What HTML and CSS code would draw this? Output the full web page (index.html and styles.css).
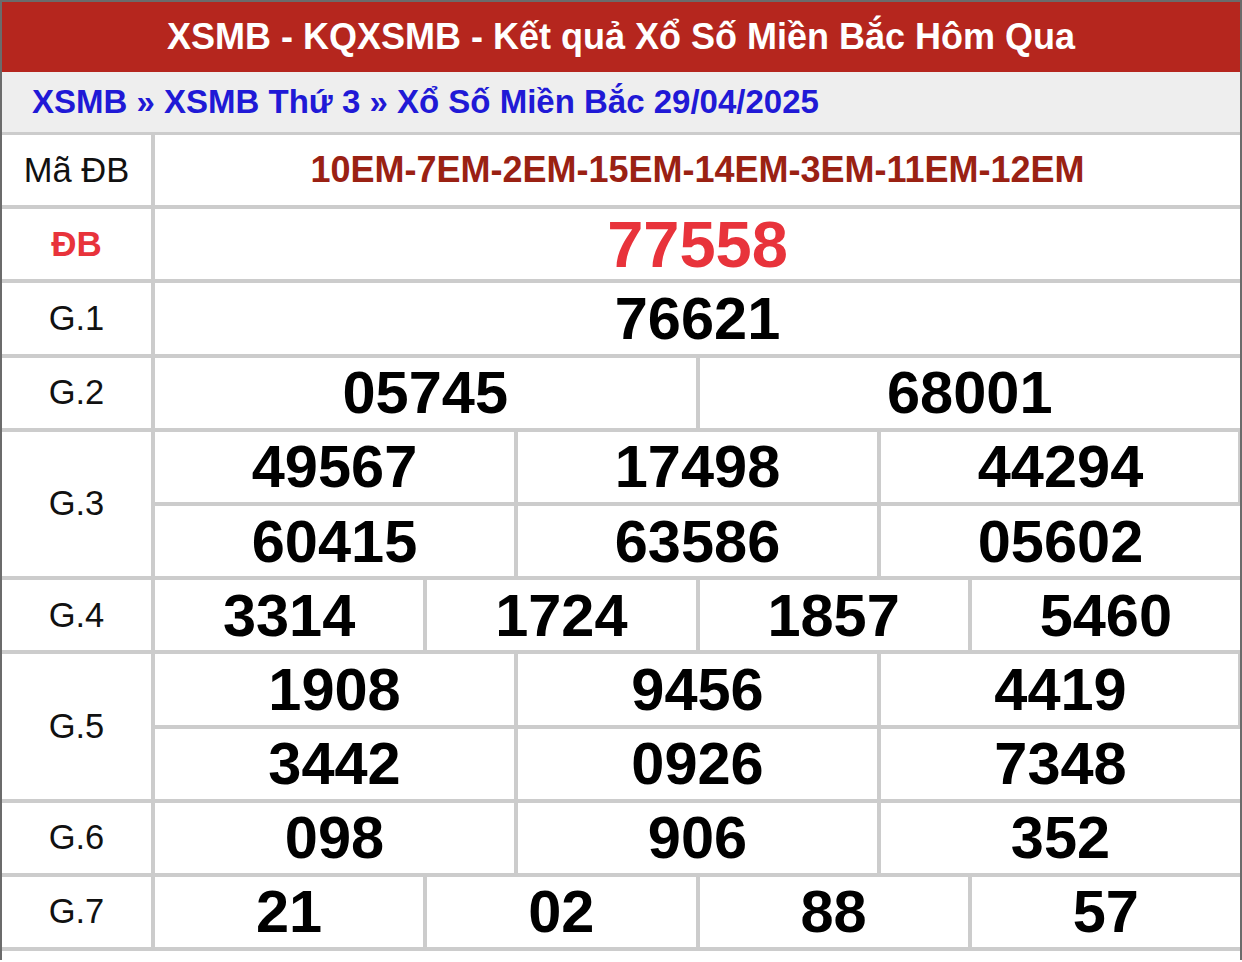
FILE: index.html
```html
<!DOCTYPE html>
<html lang="vi">
<head>
<meta charset="utf-8">
<title>XSMB - KQXSMB</title>
<link rel="stylesheet" href="styles.css">
</head>
<body>
<div class="box">
  <h1 class="title">XSMB - KQXSMB - Kết quả Xổ Số Miền Bắc Hôm Qua</h1>
  <div class="crumb"><a>XSMB</a> » <a>XSMB Thứ 3</a> » <a>Xổ Số Miền Bắc 29/04/2025</a></div>
  <div class="table">
    <div class="label">Mã ĐB</div>
    <div class="vals c1"><div class="cell code">10EM-7EM-2EM-15EM-14EM-3EM-11EM-12EM</div></div>

    <div class="label db">ĐB</div>
    <div class="vals c1"><div class="cell num special">77558</div></div>

    <div class="label">G.1</div>
    <div class="vals c1"><div class="cell num">76621</div></div>

    <div class="label">G.2</div>
    <div class="vals c2"><div class="cell num">05745</div><div class="cell num">68001</div></div>

    <div class="label tall">G.3</div>
    <div class="vals c3 r2">
      <div class="cell num">49567</div><div class="cell num">17498</div><div class="cell num edge">44294</div>
      <div class="cell num">60415</div><div class="cell num">63586</div><div class="cell num">05602</div>
    </div>

    <div class="label">G.4</div>
    <div class="vals c4"><div class="cell num">3314</div><div class="cell num">1724</div><div class="cell num">1857</div><div class="cell num">5460</div></div>

    <div class="label tall">G.5</div>
    <div class="vals c3 r2">
      <div class="cell num">1908</div><div class="cell num">9456</div><div class="cell num edge">4419</div>
      <div class="cell num">3442</div><div class="cell num">0926</div><div class="cell num">7348</div>
    </div>

    <div class="label">G.6</div>
    <div class="vals c3"><div class="cell num">098</div><div class="cell num">906</div><div class="cell num">352</div></div>

    <div class="label">G.7</div>
    <div class="vals c4"><div class="cell num">21</div><div class="cell num">02</div><div class="cell num">88</div><div class="cell num">57</div></div>
  </div>
</div>
</body>
</html>
```
FILE: styles.css
```css
html, body {
  margin: 0;
  padding: 0;
  background: #ffffff;
}
body {
  font-family: "Liberation Sans", Arial, Helvetica, sans-serif;
  width: 1242px;
  height: 962px;
  overflow: hidden;
}
.box {
  border: 2px solid #6b6b6b;
  border-bottom: none;
  min-height: 960px;
  box-sizing: border-box;
}
.title {
  margin: 0;
  height: 70px;
  background: #b5261e;
  color: #ffffff;
  font-size: 36px;
  font-weight: bold;
  display: flex;
  align-items: center;
  justify-content: center;
}
.crumb {
  height: 60px;
  line-height: 60px;
  background: #eeeeee;
  color: #2019d6;
  font-size: 33px;
  font-weight: bold;
  padding-left: 30px;
  white-space: nowrap;
}
.crumb a {
  color: #2019d6;
}
.table {
  display: grid;
  grid-template-columns: 149px 1fr;
  grid-auto-rows: 70.2px;
  gap: 4px;
  background: #cccccc;
  padding: 3px 0 4px 0;
}
.label {
  background: #ffffff;
  display: flex;
  align-items: center;
  justify-content: center;
  font-size: 34.5px;
  color: #111111;
}
.label.tall {
  grid-row: span 2;
}
.label.db {
  color: #e8333b;
  font-weight: bold;
  font-size: 35px;
}
.vals {
  display: grid;
  gap: 4px;
  grid-auto-rows: 70.2px;
}
.vals.r2 {
  grid-row: span 2;
}
.c1 { grid-template-columns: 1fr; }
.c2 { grid-template-columns: 1fr 1fr; }
.c3 { grid-template-columns: 1fr 1fr 1fr; }
.c4 { grid-template-columns: 1fr 1fr 1fr 1fr; }
.cell {
  background: #ffffff;
  display: flex;
  align-items: center;
  justify-content: center;
  color: #000000;
}
.cell.edge {
  box-shadow: inset -2px 0 0 #cccccc;
}
.code {
  color: #9a2113;
  font-weight: bold;
  font-size: 36px;
}
.num {
  font-weight: bold;
  font-size: 59.5px;
}
.num.special {
  color: #e8333b;
  font-size: 65px;
}
```
